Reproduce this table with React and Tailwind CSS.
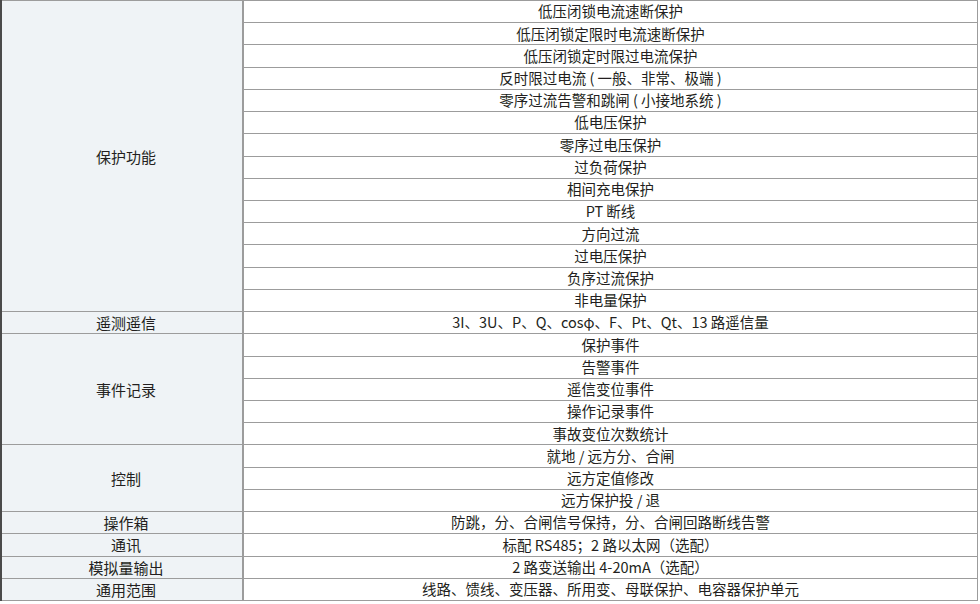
import React from "react";

const groups = [
  {
    label: "保护功能",
    span: "row-span-14",
    items: [
      "低压闭锁电流速断保护",
      "低压闭锁定限时电流速断保护",
      "低压闭锁定时限过电流保护",
      "反时限过电流 ( 一般、非常、极端 )",
      "零序过流告警和跳闸 ( 小接地系统 )",
      "低电压保护",
      "零序过电压保护",
      "过负荷保护",
      "相间充电保护",
      "PT 断线",
      "方向过流",
      "过电压保护",
      "负序过流保护",
      "非电量保护",
    ],
  },
  { label: "遥测遥信", span: "row-span-1", items: ["3I、3U、P、Q、cosφ、F、Pt、Qt、13 路遥信量"] },
  {
    label: "事件记录",
    span: "row-span-5",
    items: ["保护事件", "告警事件", "遥信变位事件", "操作记录事件", "事故变位次数统计"],
  },
  { label: "控制", span: "row-span-3", items: ["就地 / 远方分、合闸", "远方定值修改", "远方保护投 / 退"] },
  { label: "操作箱", span: "row-span-1", items: ["防跳，分、合闸信号保持，分、合闸回路断线告警"] },
  { label: "通讯", span: "row-span-1", items: ["标配 RS485；2 路以太网（选配）"] },
  { label: "模拟量输出", span: "row-span-1", items: ["2 路变送输出 4-20mA（选配）"] },
  { label: "通用范围", span: "row-span-1", items: ["线路、馈线、变压器、所用变、母联保护、电容器保护单元"] },
];

export default function App() {
  return (
    <div className="w-[980px] h-[604px] bg-white">
      <div className="w-[978px] h-[601px] bg-[#9c9c9c] border-l-2 border-[#4a4a4a] pt-px pr-px pb-px grid grid-cols-[240px_1fr] grid-rows-[repeat(27,minmax(0,1fr))] gap-x-[2px] gap-y-px text-[14.5px] leading-none text-[#231f20] font-['Noto_Sans_CJK_SC','Noto_Sans',sans-serif]">
        {groups.map((g, gi) => (
          <React.Fragment key={gi}>
            <div className={`${g.span} col-start-1 bg-[#eff3f6] flex items-center justify-center pl-[8px] text-[15px]`}>
              {g.label}
            </div>
            {g.items.map((it, ii) => (
              <div
                key={ii}
                className="col-start-2 bg-white flex items-center justify-center whitespace-nowrap"
              >
                {it}
              </div>
            ))}
          </React.Fragment>
        ))}
      </div>
    </div>
  );
}
